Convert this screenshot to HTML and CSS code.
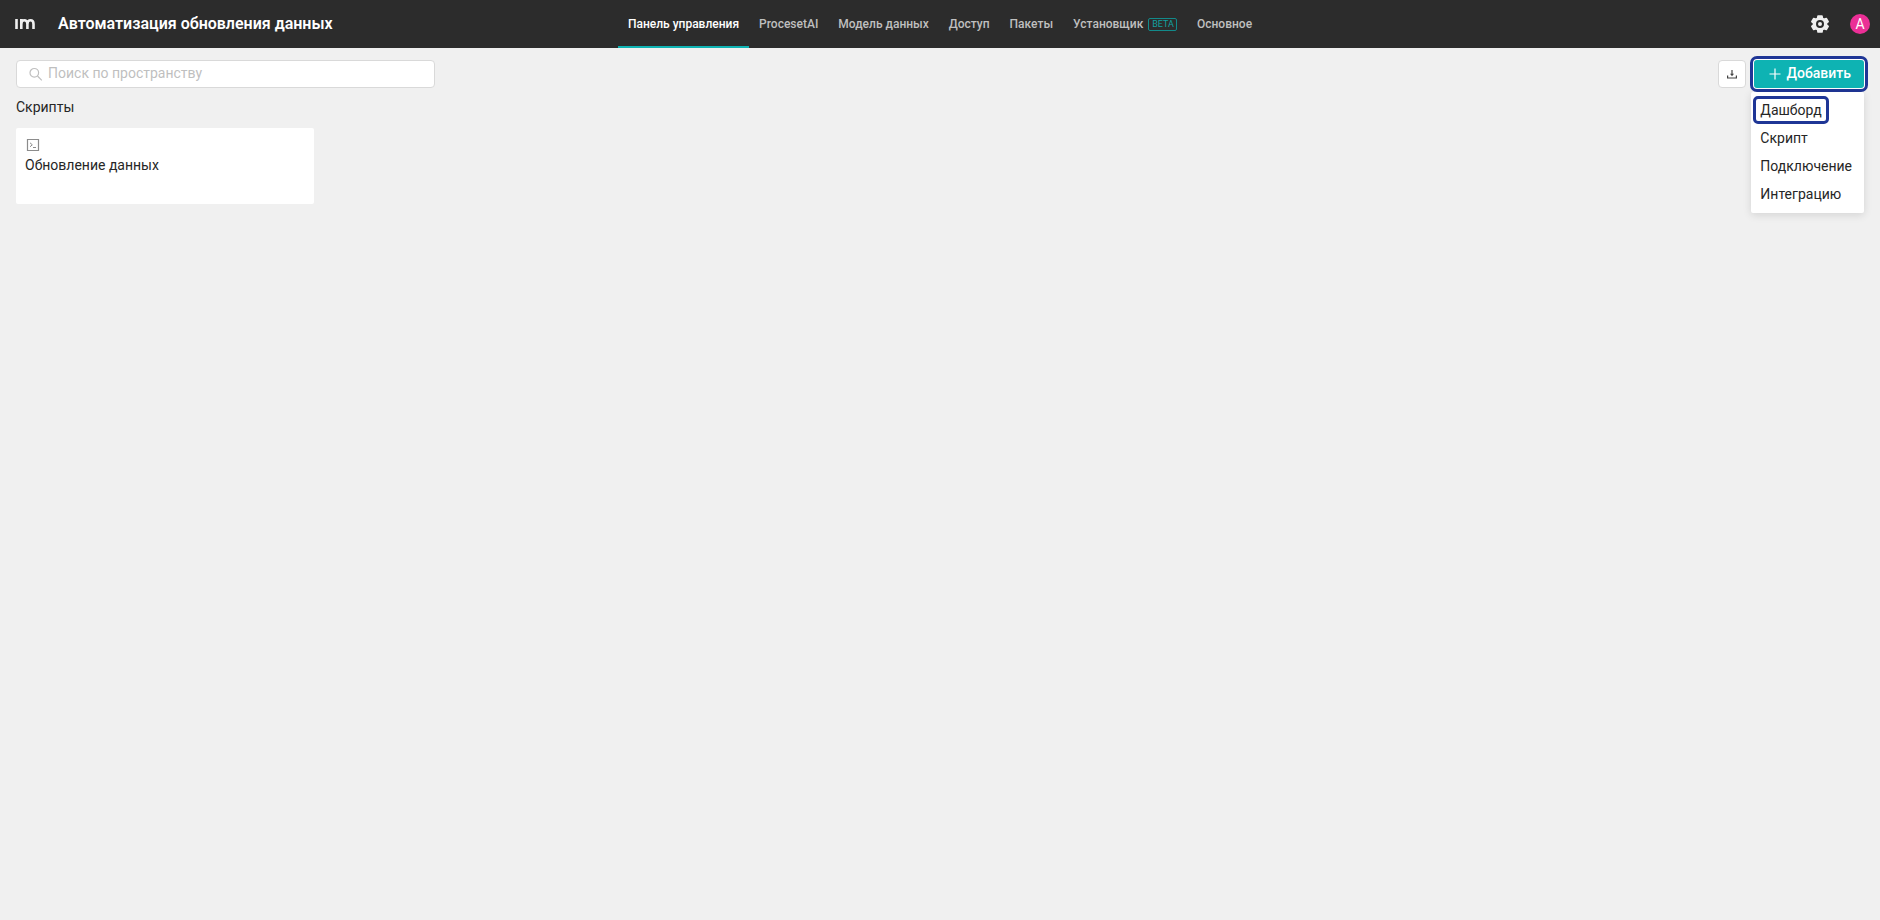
FILE: index.html
```html
<!DOCTYPE html>
<html lang="ru">
<head>
<meta charset="utf-8">
<meta name="viewport" content="width=device-width, initial-scale=1">
<title>Автоматизация обновления данных</title>
<link rel="stylesheet" href="styles.css">
</head>
<body>
<header class="header">
  <div class="header-left">
    <a class="logo" href="#" aria-label="Главная">
      <svg width="20" height="12" viewBox="0 0 20 12" fill="none" stroke="currentColor" stroke-width="2.6"><path d="M1.5 1v10M6.3 11V1M6.3 6c0-5 6.100-5 6.100 0v5M12.400 6c0-5 6.100-5 6.100 0v5"/></svg>
    </a>
    <h1 class="title">Автоматизация обновления данных</h1>
  </div>
  <nav class="nav">
    <a class="tab tab-active" href="#" aria-current="page">Панель управления</a>
    <a class="tab" href="#">ProcesetAI</a>
    <a class="tab" href="#">Модель данных</a>
    <a class="tab" href="#">Доступ</a>
    <a class="tab" href="#">Пакеты</a>
    <a class="tab" href="#">Установщик<span class="beta">BETA</span></a>
    <a class="tab" href="#">Основное</a>
  </nav>
  <div class="header-right">
    <button class="settings" type="button" aria-label="Настройки">
      <svg width="18" height="18" viewBox="0 0 18 18"><path fill="currentColor" stroke="currentColor" stroke-width="1.500" stroke-linejoin="round" d="M7 1h4l.5 2.300 1.500.900 2.300-.8 1.900 3.300L15.500 8.200v1.600l1.700 1.500-1.900 3.300-2.300-.8-1.500.9L11 17H7l-.5-2.300-1.500-.9-2.300.8-1.900-3.300 1.700-1.500V8.200L.8 6.700l1.900-3.300 2.300.8 1.500-.900z"/><circle class="gear-hole" cx="9" cy="9" r="3" fill="none" stroke-width="2"/></svg>
    </button>
    <button class="avatar" type="button" aria-label="Профиль">A</button>
  </div>
</header>
<main class="content">
  <div class="toolbar">
    <label class="search">
      <svg width="14" height="14" viewBox="0 0 14 14" fill="none" stroke="currentColor" stroke-width="1.200"><circle cx="5.300" cy="5.800" r="4.300"/><path d="M8.500 9l4.300 4.300"/></svg>
      <input class="search-input" type="text" placeholder="Поиск по пространству" aria-label="Поиск по пространству">
    </label>
    <div class="actions">
      <button class="download" type="button" aria-label="Загрузить">
        <svg width="12" height="12" viewBox="0 0 12 12" fill="none" stroke="currentColor" stroke-width="1.200"><path d="M6 2v5M1.600 7.500V10h8.800V7.500"/><path d="M4 5.800h4L6 8.300z" fill="currentColor" stroke="none"/></svg>
      </button>
      <div class="dropdown">
        <button class="add" type="button" aria-haspopup="menu" aria-expanded="true">
          <svg width="12" height="12" viewBox="0 0 12 12" stroke="currentColor" stroke-width="1.200"><path d="M6 .5v11M.5 6h11"/></svg>
          <span class="add-label">Добавить</span>
        </button>
        <div class="menu" role="menu">
          <button class="item" type="button" role="menuitem"><span class="marked">Дашборд</span></button>
          <button class="item" type="button" role="menuitem">Скрипт</button>
          <button class="item" type="button" role="menuitem">Подключение</button>
          <button class="item" type="button" role="menuitem">Интеграцию</button>
        </div>
      </div>
    </div>
  </div>
  <h2 class="section-title">Скрипты</h2>
  <div class="cards">
    <a class="card" href="#">
      <svg class="card-icon" width="14" height="14" viewBox="0 0 14 14" fill="none" stroke="currentColor"><path d="M1.500 1.500h11v11h-11z" stroke-width="1.200"/><path d="M4 4.800l2.300 2L4 8.800M7 9.500h3"/></svg>
      <span>Обновление данных</span>
    </a>
  </div>
</main>
</body>
</html>
```
FILE: styles.css
```css
* {
  box-sizing: border-box;
}

body {
  margin: 0;
  min-height: 100vh;
  background: #f0f0f0;
  color: #262626;
  font: 14px/22px Roboto, "Noto Sans", sans-serif;
}

button,
input {
  margin: 0;
  padding: 0;
  border: 0;
  background: none;
  color: inherit;
  font: inherit;
}

button {
  cursor: pointer;
}

a {
  color: inherit;
  text-decoration: none;
}

svg {
  display: block;
  flex: none;
}

.header {
  display: grid;
  grid-template-columns: 1fr auto 1fr;
  height: 48px;
  background: #2c2c2c;
  color: #fff;
}

.header-left {
  display: flex;
  align-items: center;
  gap: 23px;
  padding-left: 15px;
}

.logo {
  color: #f0f0f0;
}

.title {
  margin: 0;
  font-size: 16px;
  font-weight: 600;
  line-height: 24px;
}

.nav {
  display: flex;
}

.tab {
  display: flex;
  align-items: center;
  gap: 5px;
  padding: 2px 10px 0;
  border-bottom: 2px solid transparent;
  color: #bfbfbf;
  font-size: 12px;
  font-weight: 500;
}

.tab-active {
  border-color: #0eb3b3;
  color: #fff;
}

.beta {
  padding: 0 2px 0 3px;
  border: 1px solid #128a8a;
  border-radius: 2px;
  color: #12a0a0;
  font-size: 9px;
  font-weight: 400;
  line-height: 11px;
}

.header-right {
  display: flex;
  align-items: center;
  justify-content: flex-end;
  gap: 21px;
  padding-right: 10px;
}

.settings {
  color: #f0f0f0;
}

.gear-hole {
  stroke: #2c2c2c;
}

.avatar {
  width: 20px;
  height: 20px;
  border-radius: 50%;
  background: #eb2f96;
  color: #fff;
  line-height: 20px;
}

.content {
  padding: 12px 16px;
}

.toolbar {
  display: flex;
  justify-content: space-between;
}

.search {
  display: flex;
  align-items: center;
  gap: 5px;
  width: 419px;
  height: 28px;
  padding: 0 12px;
  border: 1px solid #d9d9d9;
  border-radius: 4px;
  background: #fff;
  color: #bfbfbf;
}

.search-input {
  flex: 1;
  min-width: 0;
  padding-bottom: 2px;
  outline: 0;
  color: #262626;
}

.search-input::placeholder {
  color: #bfbfbf;
}

.actions {
  display: flex;
  gap: 8px;
}

.download {
  display: flex;
  align-items: center;
  justify-content: center;
  width: 28px;
  height: 28px;
  border: 1px solid #d9d9d9;
  border-radius: 4px;
  background: #fff;
  color: #434343;
}

.dropdown {
  position: relative;
}

.add {
  display: flex;
  align-items: center;
  gap: 6px;
  height: 28px;
  padding: 0 13px 0 15px;
  border-radius: 3px;
  background: #0eb3b3;
  box-shadow: 0 0 0 1px #fff;
  color: #fff;
  font-weight: 500;
  outline: 3px solid #1f3696;
  outline-offset: 1px;
}

.add-label {
  padding-bottom: 2px;
}

.menu {
  position: absolute;
  top: calc(100% + 4px);
  right: 0;
  padding: 4px 0 5px;
  border-radius: 2px;
  background: #fff;
  box-shadow: 0 2px 8px rgba(0, 0, 0, 0.12);
}

.item {
  display: block;
  width: 100%;
  height: 28px;
  padding: 0 12px 0 9px;
  text-align: left;
  white-space: nowrap;
}

.marked {
  display: inline-block;
  margin: 0 -4px;
  padding: 0 4px;
  border-radius: 2px;
  outline: 3px solid #1f3696;
}

.section-title {
  margin: 8px 0 10px;
  font-size: 14px;
  font-weight: 400;
}

.cards {
  display: grid;
  grid-template-columns: repeat(6, 1fr);
  gap: 12px;
}

.card {
  display: flex;
  flex-direction: column;
  gap: 2px;
  min-height: 76px;
  padding: 10px 9px;
  border-radius: 2px;
  background: #fff;
}

.card-icon {
  margin-left: 1px;
  color: #8c8c8c;
}
```
